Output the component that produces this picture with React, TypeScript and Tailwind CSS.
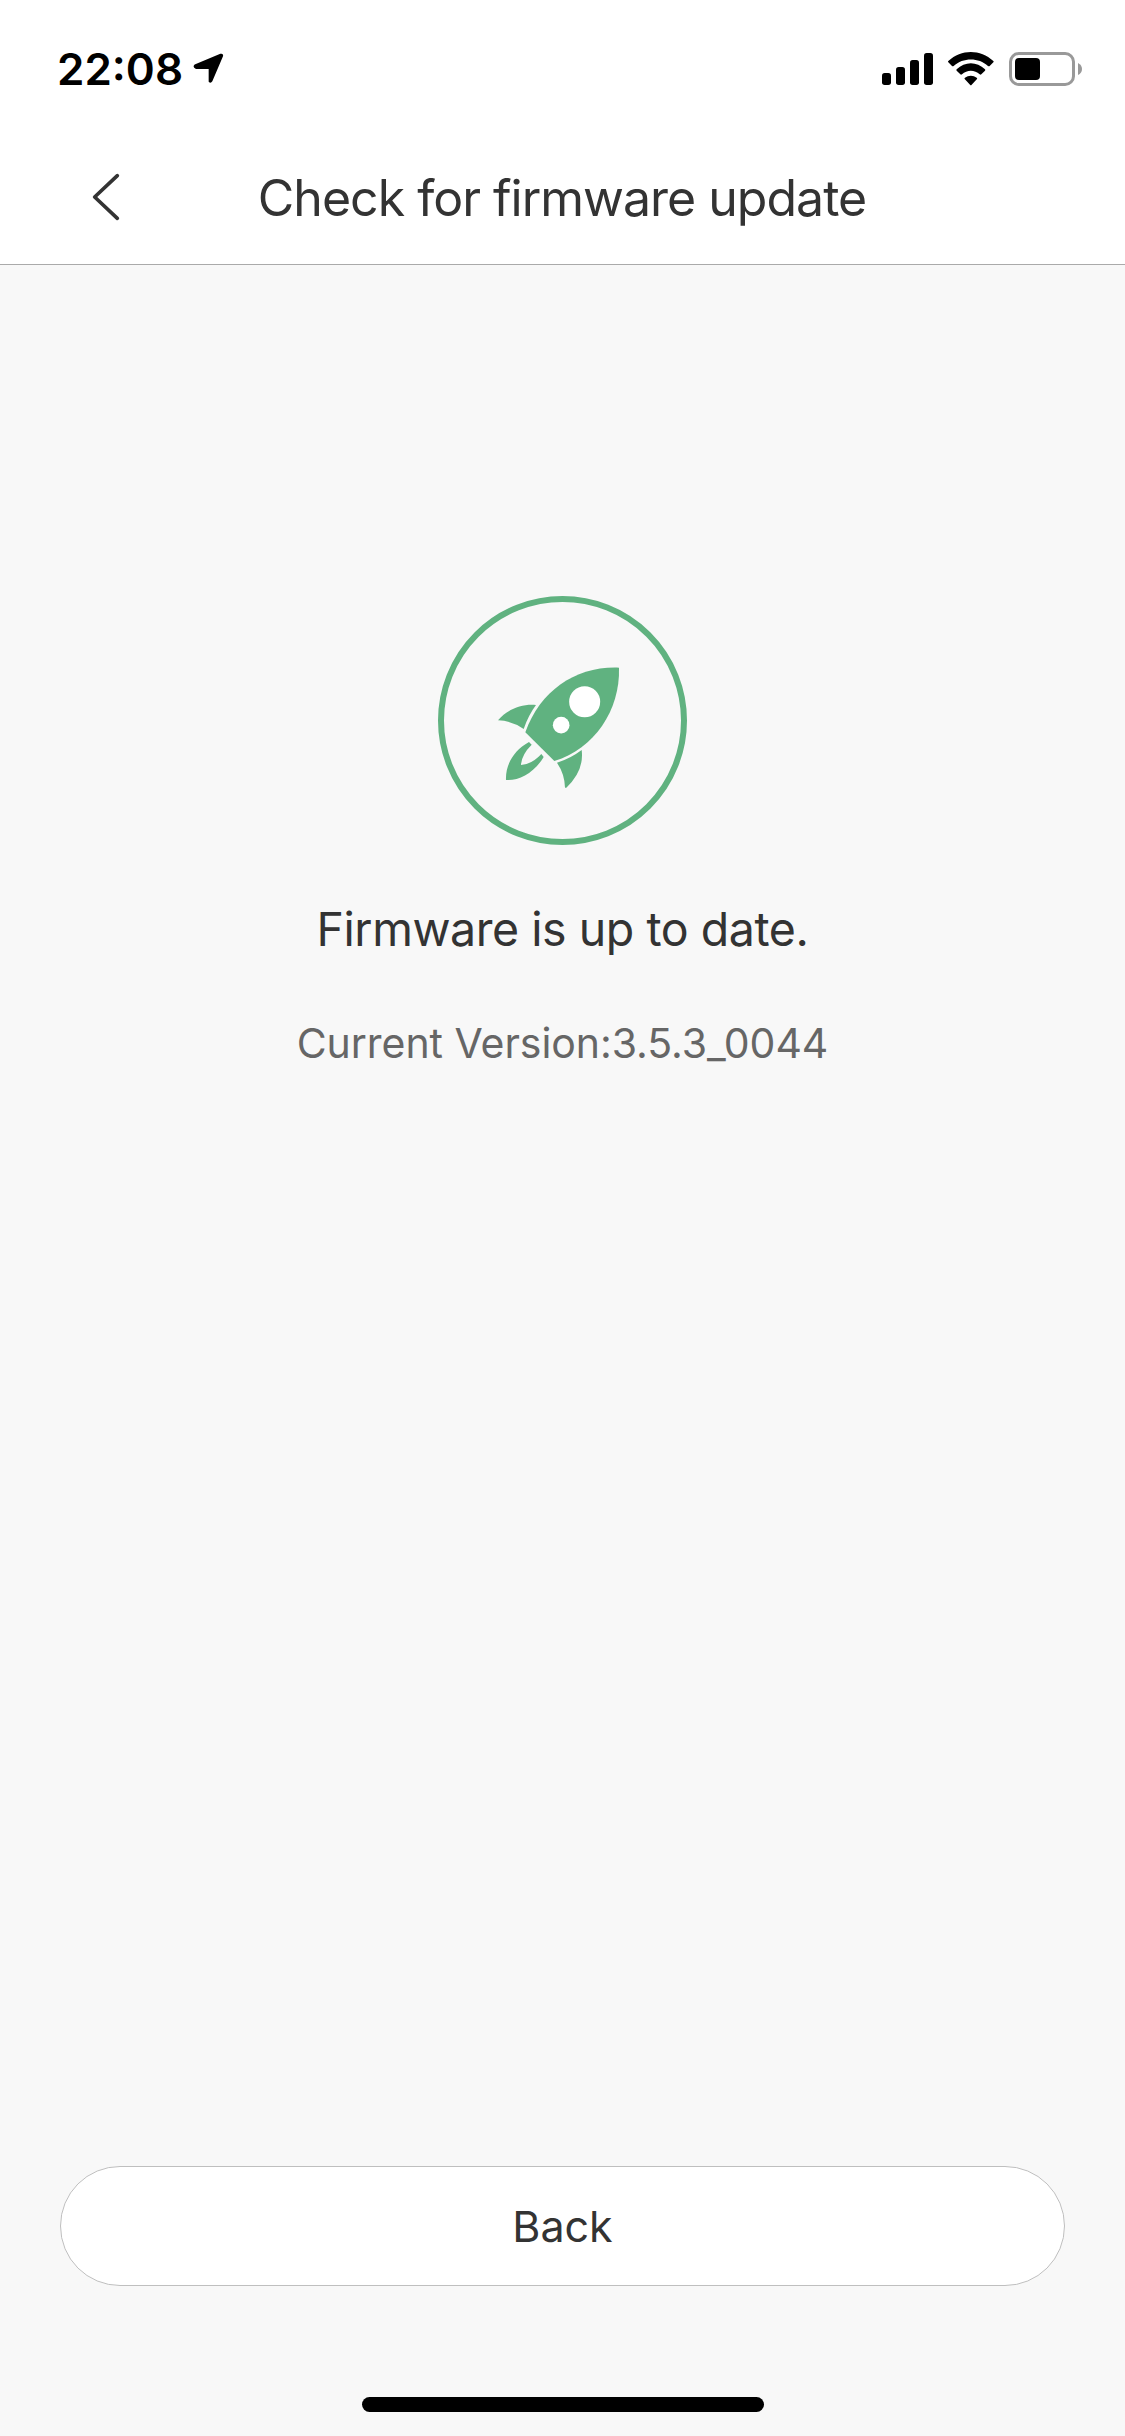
function LocationArrow() {
  return (
    <svg className="ml-[10px] h-[32px] w-[32px]" viewBox="0 0 96 96">
      <path
        d="M5 34.500L82 2.500Q92 0 90 10L58 85Q53 93 47 86V48H9Q-3 42 5 34.500Z"
        fill="#000"
      />
    </svg>
  );
}

function SignalIcon() {
  return (
    <svg className="h-[34px] w-[52px]" viewBox="0 0 156 102">
      <rect x="3" y="63" width="27" height="36" rx="8" />
      <rect x="45" y="45" width="27" height="54" rx="8" />
      <rect x="87" y="24" width="27" height="75" rx="8" />
      <rect x="129" y="3" width="27" height="96" rx="8" />
    </svg>
  );
}

function WifiIcon() {
  return (
    <svg className="ml-[15px] h-[34px] w-[47px]" viewBox="0 0 141 102">
      <path d="M1 31Q-1 29 1 27C40 -9 97 -9 136 27Q138 29 136 31L125 42Q123 44 120 42C92 16 45 16 17 42Q14 44 12 42Z" />
      <path d="M26 56Q24 54 26 52C51 28 86 28 111 52Q113 54 111 56L100 67Q98 69 95 67C80 53 57 53 42 67Q39 69 37 67Z" />
      <path d="M50 81Q48 79 51 77C61 69 76 69 86 77Q89 79 87 81L71 98Q68.500 101 66 98Z" />
    </svg>
  );
}

function BatteryIcon() {
  return (
    <svg className="ml-[14px] h-[34px] w-[74px]" viewBox="0 0 222 102">
      <rect
        x="4.500"
        y="4.500"
        width="189"
        height="93"
        rx="25"
        fill="none"
        stroke="#999"
        strokeWidth="9"
      />
      <rect x="18" y="18" width="75" height="66" rx="12" />
      <path d="M207 33Q219 39 219 51T207 69Z" fill="#999" />
    </svg>
  );
}

function StatusBar() {
  return (
    <div className="flex h-[132px] items-start justify-between pr-[42px] pl-[57px]">
      <div className="flex items-center pt-[42px]">
        <span className="text-[44px] leading-[54px] font-semibold">22:08</span>
        <LocationArrow />
      </div>
      <div className="flex pt-[52px]">
        <SignalIcon />
        <WifiIcon />
        <BatteryIcon />
      </div>
    </div>
  );
}

function Header() {
  return (
    <header className="flex h-[133px] items-start border-b border-[#aaa]">
      <button className="mt-[38px] ml-[90px] h-[52px] w-[32px]">
        <svg className="h-[52px] w-[32px]" viewBox="0 0 96 156">
          <path
            d="M82 17L14 81L82 145"
            fill="none"
            stroke="#333"
            strokeWidth="11"
            strokeLinecap="round"
            strokeLinejoin="round"
          />
        </svg>
      </button>
      <h1 className="mt-[36px] mr-[123px] flex-1 text-center text-[50px] leading-[60px] tracking-[-1px] text-[#333]">
        Check for firmware update
      </h1>
    </header>
  );
}

function RocketBadge() {
  return (
    <svg className="h-[265px] w-[265px]" viewBox="0 0 795 795" fill="#60b280">
      <circle
        cx="397.500"
        cy="391.500"
        r="364.500"
        fill="none"
        stroke="#60b280"
        strokeWidth="18"
      />
      <path d="M567 233C571 361 493 475 373 513L286 427C331 300 440 228 567 233Z" />
      <circle cx="464" cy="335" r="46.500" fill="#fff" />
      <circle cx="393.500" cy="405.500" r="25" fill="#fff" />
      <path d="M204 391C232 358 275 341 318 345Q295 376 281 417Q246 392 204 391Z" />
      <path d="M455 480Q463 542 409 593H405Q404 552 381 518Q421 506 455 480Z" />
      <path d="M297 456L305 464Q274 495 273 525Q306 523 334 492L341 501C312 549 267 573 228 570C226 527 249 482 297 456Z" />
    </svg>
  );
}

export default function App() {
  return (
    <div className="flex h-[2436px] w-[1125px] flex-col bg-[#f8f8f8] font-['Inter','Liberation_Sans',sans-serif]">
      <div className="bg-white">
        <StatusBar />
        <Header />
      </div>
      <main className="flex flex-1 flex-col items-center pt-[325px]">
        <RocketBadge />
        <p className="mt-[44px] text-[46.500px] leading-[60px] tracking-[-0.45px] text-[#333]">
          Firmware is up to date.
        </p>
        <p className="mt-[56px] text-[41px] leading-[56px] tracking-[-0.05px] text-[#666]">
          Current Version:3.5.3_0044
        </p>
      </main>
      <footer className="flex flex-col items-center pb-[24px]">
        <button className="h-[120px] w-[1005px] rounded-full border border-[#bfbfbf] bg-white text-[43px] leading-[60px] text-[#333]">
          Back
        </button>
        <div className="mt-[111px] h-[15px] w-[402px] rounded-full bg-black" />
      </footer>
    </div>
  );
}
